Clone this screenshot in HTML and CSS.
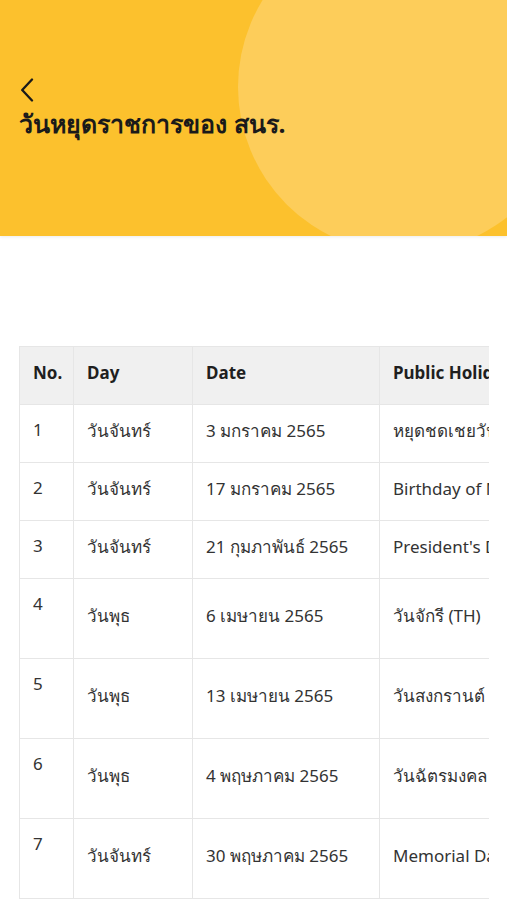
FILE: index.html
```html
<!DOCTYPE html>
<html lang="th">
<head>
<meta charset="utf-8">
<title>วันหยุดราชการของ สนร.</title>
<link rel="stylesheet" href="styles.css">
</head>
<body>
<header class="hero">
  <div class="hero-inner">
    <button class="back" aria-label="back">
      <svg width="14" height="24" viewBox="0 0 14 24"><path d="M12 1.5 L2.2 12 L12 22.5" fill="none" stroke="#1a1a1a" stroke-width="2.3" stroke-linecap="round" stroke-linejoin="round"/></svg>
    </button>
    <h1 class="title">วันหยุดราชการของ สนร.</h1>
  </div>
</header>
<main class="content">
  <div class="table-wrap">
    <table class="holidays">
      <thead>
        <tr>
          <th class="c-no">No.</th>
          <th class="c-day">Day</th>
          <th class="c-date">Date</th>
          <th class="c-name">Public Holiday</th>
        </tr>
      </thead>
      <tbody>
        <tr><td class="c-no">1</td><td>วันจันทร์</td><td>3 มกราคม 2565</td><td>หยุดชดเชยวันขึ้นปีใหม่</td></tr>
        <tr><td class="c-no">2</td><td>วันจันทร์</td><td>17 มกราคม 2565</td><td>Birthday of Martin Luther King, Jr. (US)</td></tr>
        <tr><td class="c-no">3</td><td>วันจันทร์</td><td>21 กุมภาพันธ์ 2565</td><td>President's Day (US)</td></tr>
        <tr class="tall"><td class="c-no">4</td><td>วันพุธ</td><td>6 เมษายน 2565</td><td>วันจักรี (TH)</td></tr>
        <tr class="tall"><td class="c-no">5</td><td>วันพุธ</td><td>13 เมษายน 2565</td><td>วันสงกรานต์ (TH)</td></tr>
        <tr class="tall"><td class="c-no">6</td><td>วันพุธ</td><td>4 พฤษภาคม 2565</td><td>วันฉัตรมงคล (TH)</td></tr>
        <tr class="tall"><td class="c-no">7</td><td>วันจันทร์</td><td>30 พฤษภาคม 2565</td><td>Memorial Day (US)</td></tr>
      </tbody>
    </table>
  </div>
</main>
</body>
</html>
```

FILE: styles.css
```css
html, body {
  margin: 0;
  padding: 0;
  background: #ffffff;
}
body {
  font-family: "Noto Sans", sans-serif;
  color: #2b2b2b;
  width: 507px;
  overflow: hidden;
}
.hero {
  position: relative;
  height: 236px;
  background: #fcc12d;
  overflow: hidden;
  box-shadow: 0 1px 3px rgba(0,0,0,0.08);
}
.hero::before {
  content: "";
  position: absolute;
  left: 238px;
  top: -79px;
  width: 332px;
  height: 332px;
  border-radius: 50%;
  background: #fdcd5a;
}
.hero-inner {
  position: relative;
  padding: 78px 19px 0 19px;
  display: flex;
  flex-direction: column;
  align-items: flex-start;
}
.back {
  border: 0;
  background: none;
  padding: 0 0 0 1px;
  margin: 0;
  height: 24px;
  display: block;
  cursor: pointer;
}
.back svg { display: block; }
.title {
  margin: 4px 0 0 0;
  font-size: 25px;
  font-weight: 700;
  line-height: 34px;
  color: #1a1a1a;
}
.content {
  padding: 110px 18px 0 19px;
}
.table-wrap {
  overflow: hidden;
  width: 470px;
}
.holidays {
  border-collapse: collapse;
  table-layout: fixed;
  width: 620px;
  font-size: 17px;
  border: 1px solid #e6e6e6;
}
.holidays tr {
  height: 58px;
}
.holidays tr.tall {
  height: 80px;
}
.holidays th,
.holidays td {
  border: 1px solid #e6e6e6;
  padding: 0 13px 6px 13px;
  text-align: left;
  white-space: nowrap;
  overflow: hidden;
  line-height: 20px;
}
.holidays th {
  background: #f0f0f0;
  font-weight: 700;
  color: #1f1f1f;
  vertical-align: middle;
}
.holidays td {
  vertical-align: middle;
  color: #333333;
}
.holidays td.c-no {
  vertical-align: top;
  padding-top: 15px;
  padding-bottom: 0;
}
.c-no { width: 27px; }
.c-day { width: 92px; }
.c-date { width: 160px; }
.c-name { width: 260px; }
```
